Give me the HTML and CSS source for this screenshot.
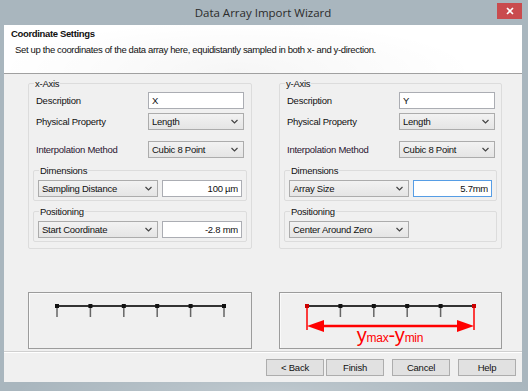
FILE: index.html
```html
<!DOCTYPE html>
<html lang="en">
<head>
    <meta charset="UTF-8">
    <title>Data Array Import Wizard</title>
    <link rel="stylesheet" href="styles.css">
</head>
<body>

<div class="window">
    <div class="titlebar">
        <div class="title">Data Array Import Wizard</div>
        <div class="close-btn">
            <svg width="8" height="8" viewBox="0 0 8 8"><path d="M1 1L7 7M7 1L1 7" stroke="#fff" stroke-width="1.6"/></svg>
        </div>
    </div>

    <div class="client">
        <div class="header">
            <div class="header-title">Coordinate Settings</div>
            <div class="header-sub">Set up the coordinates of the data array here, equidistantly sampled in both x- and y-direction.</div>
        </div>

        <div class="content">
            <!-- x axis -->
            <div class="axis-col">
                <fieldset class="group">
                    <legend>x-Axis</legend>
                    <div class="field-row">
                        <span class="field-label">Description</span>
                        <input class="textbox" type="text" value="X">
                    </div>
                    <div class="field-row">
                        <span class="field-label">Physical Property</span>
                        <div class="combo"><span>Length</span><svg class="chev" width="7" height="5" viewBox="0 0 7 5"><path d="M0.5 1L3.5 4L6.5 1" fill="none" stroke="#444" stroke-width="1.2"/></svg></div>
                    </div>
                    <div class="field-row gap-big">
                        <span class="field-label interp">Interpolation Method</span>
                        <div class="combo"><span>Cubic 8 Point</span><svg class="chev" width="7" height="5" viewBox="0 0 7 5"><path d="M0.5 1L3.5 4L6.5 1" fill="none" stroke="#444" stroke-width="1.2"/></svg></div>
                    </div>
                    <fieldset class="subgroup">
                        <legend>Dimensions</legend>
                        <div class="combo-row">
                            <div class="combo"><span>Sampling Distance</span><svg class="chev" width="7" height="5" viewBox="0 0 7 5"><path d="M0.5 1L3.5 4L6.5 1" fill="none" stroke="#444" stroke-width="1.2"/></svg></div>
                            <input class="textbox num" type="text" value="100 µm">
                        </div>
                    </fieldset>
                    <fieldset class="subgroup">
                        <legend>Positioning</legend>
                        <div class="combo-row">
                            <div class="combo"><span>Start Coordinate</span><svg class="chev" width="7" height="5" viewBox="0 0 7 5"><path d="M0.5 1L3.5 4L6.5 1" fill="none" stroke="#444" stroke-width="1.2"/></svg></div>
                            <input class="textbox num" type="text" value="-2.8 mm">
                        </div>
                    </fieldset>
                </fieldset>

                <div class="preview">
                    <svg width="222" height="55" viewBox="0 0 222 55">
                        <line x1="28" y1="13" x2="195" y2="13" stroke="#333" stroke-width="2"/>
                        <g stroke="#666" stroke-width="1.5">
                            <line x1="28" y1="13" x2="28" y2="24"/>
                            <line x1="61.4" y1="13" x2="61.4" y2="24"/>
                            <line x1="94.8" y1="13" x2="94.8" y2="24"/>
                            <line x1="128.2" y1="13" x2="128.2" y2="24"/>
                            <line x1="161.6" y1="13" x2="161.6" y2="24"/>
                            <line x1="195" y1="13" x2="195" y2="24"/>
                        </g>
                        <g fill="#111">
                            <rect x="26" y="11" width="4" height="4"/>
                            <rect x="59.4" y="11" width="4" height="4"/>
                            <rect x="92.8" y="11" width="4" height="4"/>
                            <rect x="126.2" y="11" width="4" height="4"/>
                            <rect x="159.6" y="11" width="4" height="4"/>
                            <rect x="193" y="11" width="4" height="4"/>
                        </g>
                    </svg>
                </div>
            </div>

            <!-- y axis -->
            <div class="axis-col">
                <fieldset class="group">
                    <legend>y-Axis</legend>
                    <div class="field-row">
                        <span class="field-label">Description</span>
                        <input class="textbox" type="text" value="Y">
                    </div>
                    <div class="field-row">
                        <span class="field-label">Physical Property</span>
                        <div class="combo"><span>Length</span><svg class="chev" width="7" height="5" viewBox="0 0 7 5"><path d="M0.5 1L3.5 4L6.5 1" fill="none" stroke="#444" stroke-width="1.2"/></svg></div>
                    </div>
                    <div class="field-row gap-big">
                        <span class="field-label interp">Interpolation Method</span>
                        <div class="combo"><span>Cubic 8 Point</span><svg class="chev" width="7" height="5" viewBox="0 0 7 5"><path d="M0.5 1L3.5 4L6.5 1" fill="none" stroke="#444" stroke-width="1.2"/></svg></div>
                    </div>
                    <fieldset class="subgroup">
                        <legend>Dimensions</legend>
                        <div class="combo-row">
                            <div class="combo"><span>Array Size</span><svg class="chev" width="7" height="5" viewBox="0 0 7 5"><path d="M0.5 1L3.5 4L6.5 1" fill="none" stroke="#444" stroke-width="1.2"/></svg></div>
                            <input class="textbox num focused" type="text" value="5.7mm">
                        </div>
                    </fieldset>
                    <fieldset class="subgroup">
                        <legend>Positioning</legend>
                        <div class="combo-row">
                            <div class="combo"><span>Center Around Zero</span><svg class="chev" width="7" height="5" viewBox="0 0 7 5"><path d="M0.5 1L3.5 4L6.5 1" fill="none" stroke="#444" stroke-width="1.2"/></svg></div>
                        </div>
                    </fieldset>
                </fieldset>

                <div class="preview">
                    <svg width="221" height="55" viewBox="0 0 221 55">
                        <line x1="27" y1="13" x2="194" y2="13" stroke="#333" stroke-width="2"/>
                        <g stroke="#666" stroke-width="1.5">
                            <line x1="60.4" y1="13" x2="60.4" y2="24"/>
                            <line x1="93.8" y1="13" x2="93.8" y2="24"/>
                            <line x1="127.2" y1="13" x2="127.2" y2="24"/>
                            <line x1="160.6" y1="13" x2="160.6" y2="24"/>
                        </g>
                        <g fill="#111">
                            <rect x="58.4" y="11" width="4" height="4"/>
                            <rect x="91.8" y="11" width="4" height="4"/>
                            <rect x="125.2" y="11" width="4" height="4"/>
                            <rect x="158.6" y="11" width="4" height="4"/>
                        </g>
                        <g stroke="#f00" stroke-width="1.5">
                            <line x1="27" y1="12" x2="27" y2="37"/>
                            <line x1="194" y1="12" x2="194" y2="37"/>
                        </g>
                        <rect x="25" y="11" width="4" height="4" fill="#c00"/>
                        <rect x="192" y="11" width="4" height="4" fill="#c00"/>
                        <line x1="40" y1="33" x2="181" y2="33" stroke="#f00" stroke-width="2.5"/>
                        <polygon points="27,33 44,27 44,39" fill="#f00"/>
                        <polygon points="194,33 177,27 177,39" fill="#f00"/>
                        <text x="110" y="49" text-anchor="middle" fill="#f00" font-family="Liberation Sans, Arial, sans-serif"><tspan font-size="20">y</tspan><tspan font-size="12">max</tspan><tspan font-size="20">-y</tspan><tspan font-size="12">min</tspan></text>
                    </svg>
                </div>
            </div>
        </div>

        <div class="footer">
            <button class="btn">&lt; Back</button>
            <button class="btn btn-next">Finish</button>
            <button class="btn btn-sep">Cancel</button>
            <button class="btn btn-sep">Help</button>
        </div>
    </div>
</div>

</body>
</html>
```

FILE: styles.css
```css
body {
    margin: 0;
    background-color: #a9b6be;
    font-family: 'Liberation Sans', Arial, sans-serif;
}

.window {
    width: 528px;
    height: 391px;
    box-sizing: border-box;
    padding: 0 6px 9px 4px;
    display: flex;
    flex-direction: column;
    background-color: #a9b6be;
    background-image: radial-gradient(ellipse 260px 30px at 52% 100%, rgba(255, 255, 255, 0.25), rgba(255, 255, 255, 0));
}

.titlebar {
    height: 25px;
    display: flex;
    align-items: flex-start;
}

.title {
    flex: 1;
    padding-left: 25px;
    line-height: 25px;
    text-align: center;
    font-family: 'Open Sans', 'Noto Sans', sans-serif;
    font-size: 11.5px;
    color: #2b2b2b;
}

.close-btn {
    width: 25px;
    height: 16px;
    margin-top: 3px;
    background-color: #c94b4e;
    display: flex;
    align-items: center;
    justify-content: center;
}

.client {
    flex: 1;
    display: flex;
    flex-direction: column;
    background-color: #f0f0f0;
    font-size: 9.5px;
    letter-spacing: -0.25px;
    color: #111;
}

.header {
    height: 49px;
    box-sizing: border-box;
    padding: 3px 0 0 7px;
    background-color: #fff;
    background-image: radial-gradient(ellipse 240px 50px at 45% 95%, rgba(0, 0, 0, 0.035), rgba(0, 0, 0, 0));
    border-bottom: 1px solid #a0a0a0;
}

.header-title {
    font-weight: bold;
    line-height: 12px;
    letter-spacing: -0.35px;
}

.header-sub {
    margin-top: 4px;
    padding-left: 4px;
    line-height: 12px;
    letter-spacing: -0.35px;
}

.content {
    flex: 1;
    display: grid;
    grid-template-columns: 224px 223px;
    column-gap: 27px;
    padding: 3px 0 0 24px;
}

fieldset {
    margin: 0;
    min-width: 0;
    border: 1px solid #dcdcdc;
    border-radius: 2px;
}

legend {
    line-height: 13px;
    padding: 0 1px;
}

.group {
    padding: 2px 6px 6px 7px;
}

.group > legend {
    margin-left: -2px;
}

.subgroup {
    margin: 4px -2px 0 -3px;
    padding: 3px 4px 3px 4px;
}

.group > legend + .field-row + .field-row + .field-row + .subgroup {
    margin-top: 6px;
}

.subgroup > legend {
    margin-left: 1px;
}

.field-row {
    display: grid;
    grid-template-columns: 112px 96px;
    align-items: center;
    margin-top: 4px;
}

.field-row:first-of-type {
    margin-top: 0;
}

.field-row.gap-big {
    margin-top: 11px;
}

.interp {
    color: #2a1530;
}

.combo-row {
    display: grid;
    grid-template-columns: 120px minmax(0, 1fr);
    column-gap: 4px;
}

.textbox {
    width: 100%;
    min-width: 0;
    height: 17px;
    box-sizing: border-box;
    margin: 0;
    padding: 0 3px;
    border: 1px solid #abadb3;
    background-color: #fff;
    font-family: inherit;
    font-size: inherit;
    letter-spacing: inherit;
    color: #111;
    outline: none;
}

.textbox.num {
    text-align: right;
    padding-right: 3px;
}

.textbox.focused {
    border-color: #569de5;
}

.combo {
    height: 17px;
    box-sizing: border-box;
    padding: 0 5px 0 3px;
    border: 1px solid #acacac;
    background: linear-gradient(#f2f2f2, #e5e5e5);
    display: flex;
    align-items: center;
    justify-content: space-between;
}

.preview {
    margin-top: 43px;
    height: 57px;
    box-sizing: border-box;
    border: 1px solid #9c9c9c;
    box-shadow: inset 1px 1px 0 #fafafa;
}

.preview svg {
    display: block;
}

.footer {
    height: 31px;
    box-sizing: border-box;
    border-top: 1px solid #d0d0d0;
    box-shadow: inset 0 1px 0 #fff;
    display: flex;
    justify-content: flex-end;
    padding: 7px 6px 0 0;
}

.btn {
    width: 58px;
    height: 17px;
    margin: 0;
    padding: 0;
    border: 1px solid #adadad;
    background-color: #e1e1e1;
    font-family: inherit;
    font-size: inherit;
    letter-spacing: inherit;
    color: #111;
}

.btn-next {
    margin-left: 2px;
}

.btn-sep {
    margin-left: 8px;
}
```
